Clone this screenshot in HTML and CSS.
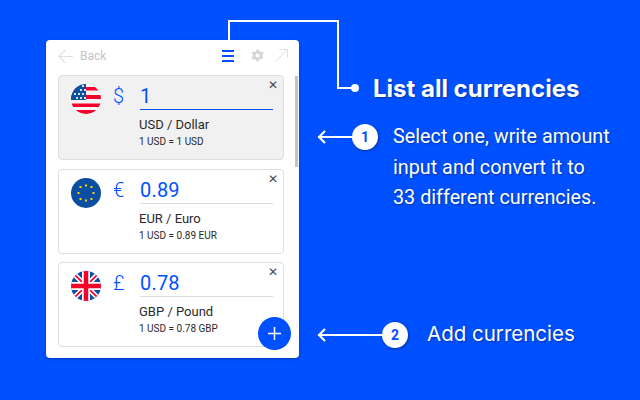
FILE: index.html
```html
<!DOCTYPE html>
<html lang="en">
<head>
<meta charset="utf-8">
<title>Currency converter</title>
<link rel="stylesheet" href="styles.css">
</head>
<body>
<main class="stage">
  <section class="panel">
    <header class="topbar">
      <svg class="back-arrow" width="15" height="15" viewBox="0 0 15 15"><path d="M7.5 .8 .9 7.5l6.6 6.7M.9 7.5h14" fill="none" stroke="#dcdcdc" stroke-width="1.1"/></svg>
      <span class="back-label">Back</span>
      <span class="topbar-space"></span>
      <svg class="menu-icon" width="12" height="12" viewBox="0 0 12 12"><path d="M0 0h12v2H0zM0 5h12v2H0zM0 10h12v2H0z" fill="#0050ff"/></svg>
      <svg class="gear-icon" width="13" height="13" viewBox="2 2 20 20"><path fill="#d6d6d6" fill-rule="evenodd" d="M19.4 13a7.500 7.500 0 0 0 0-2l2.200-1.700-2.100-3.600-2.600 1a7.600 7.600 0 0 0-1.800-1l-.4-2.700H9.700l-.4 2.700a7.600 7.600 0 0 0-1.800 1l-2.600-1-2.100 3.600L5 11a7.500 7.500 0 0 0 0 2l-2.200 1.700 2.100 3.600 2.600-1c.5.400 1.100.8 1.800 1l.4 2.700h4.200l.4-2.700c.7-.2 1.300-.6 1.800-1l2.600 1 2.100-3.600zM12 15a3 3 0 1 1 0-6 3 3 0 0 1 0 6z"/></svg>
      <svg class="expand-icon" width="13" height="13" viewBox="0 0 14 14"><path d="M.5 13.500 13.500.5M4.500.5h9v9" fill="none" stroke="#dedede" stroke-width="1"/></svg>
    </header>
    <div class="list">
      <article class="card card-active">
        <svg class="flag" width="30" height="30" viewBox="0 0 30 30">
          <defs><clipPath id="c1"><circle cx="15" cy="15" r="15"/></clipPath></defs>
          <g clip-path="url(#c1)">
            <rect width="30" height="30" fill="#f4f4f4"/>
            <path d="M0 3h30v3.500H0zM0 11h30v4H0zM0 19.500h30v3.500H0zM0 26h30v4H0z" fill="#f5002a"/>
            <path d="M0 0h15v16H0z" fill="#0b4ea2"/>
            <path d="M5 13h2v2H5zM9 13h2v2H9zM13 13h2v2h-2zM3 9h2v2H3zM7 9h2v2H7zM11 9h2v2h-2zM9 5h2v2H9zM13 5h2v2h-2zM11 1h2v2h-2z" fill="#fff" opacity=".85"/>
          </g>
        </svg>
        <span class="symbol">$</span>
        <div class="card-main">
          <div class="amount amount-active">1</div>
          <div class="name">USD / Dollar</div>
          <div class="rate">1 USD = 1 USD</div>
        </div>
        <span class="close">&#x2715;</span>
      </article>
      <article class="card">
        <svg class="flag" width="30" height="30" viewBox="0 0 30 30">
          <circle cx="15" cy="15" r="15" fill="#0b4ea2"/>
          <g fill="#ffd800">
            <rect x="14" y="6.500" width="2" height="2"/><rect x="19.500" y="8" width="2" height="2"/><rect x="21.500" y="14" width="2" height="2"/><rect x="19.500" y="20" width="2" height="2"/><rect x="14" y="21.500" width="2" height="2"/><rect x="8.500" y="20" width="2" height="2"/><rect x="6.500" y="14" width="2" height="2"/><rect x="8.500" y="8" width="2" height="2"/>
          </g>
        </svg>
        <span class="symbol">€</span>
        <div class="card-main">
          <div class="amount">0.89</div>
          <div class="name">EUR / Euro</div>
          <div class="rate">1 USD = 0.89 EUR</div>
        </div>
        <span class="close">&#x2715;</span>
      </article>
      <article class="card">
        <svg class="flag" width="30" height="30" viewBox="0 0 30 30">
          <defs><clipPath id="c3"><circle cx="15" cy="15" r="15"/></clipPath></defs>
          <g clip-path="url(#c3)">
            <rect width="30" height="30" fill="#0b4ea2"/>
            <path d="M0 0 30 30M30 0 0 30" stroke="#fff" stroke-width="5"/>
            <path d="M0 0 30 30M30 0 0 30" stroke="#f5002a" stroke-width="1.600"/>
            <path d="M15 0v30M0 15h30" stroke="#fff" stroke-width="8"/>
            <path d="M15 0v30M0 15h30" stroke="#f5002a" stroke-width="4.500"/>
          </g>
        </svg>
        <span class="symbol">£</span>
        <div class="card-main">
          <div class="amount">0.78</div>
          <div class="name">GBP / Pound</div>
          <div class="rate">1 USD = 0.78 GBP</div>
        </div>
        <span class="close">&#x2715;</span>
      </article>
    </div>
    <div class="scrollbar"></div>
    <div class="fab"><svg width="13" height="13" viewBox="0 0 13 13"><path d="M6.500 0v13M0 6.500h13" stroke="#fff" stroke-width="1.500"/></svg></div>
  </section>

  <svg class="connector" width="140" height="80" viewBox="0 0 140 80"><path d="M1 20V1h109v67h15" fill="none" stroke="#fff" stroke-width="2"/><circle cx="127" cy="68" r="4" fill="#fff"/></svg>

  <section class="notes">
    <h1 class="title">List all currencies</h1>
    <div class="note note-one">
      <div class="pointer pointer-short">
        <svg class="pointer-head" width="9" height="14" viewBox="0 0 9 14"><path d="M8 1 2 7l6 6" fill="none" stroke="#fff" stroke-width="2"/></svg>
        <span class="pointer-line"></span>
        <span class="badge">1</span>
      </div>
      <p class="note-text">Select one, write amount<br>input and convert it to<br>33 different currencies.</p>
    </div>
    <div class="note note-two">
      <div class="pointer pointer-long">
        <svg class="pointer-head" width="9" height="14" viewBox="0 0 9 14"><path d="M8 1 2 7l6 6" fill="none" stroke="#fff" stroke-width="2"/></svg>
        <span class="pointer-line"></span>
        <span class="badge">2</span>
      </div>
      <p class="add-text">Add currencies</p>
    </div>
  </section>
</main>
</body>
</html>
```

FILE: styles.css
```css
* { box-sizing: border-box; }
html, body { margin: 0; padding: 0; }
body { width: 640px; height: 400px; overflow: hidden; background: #0050ff; font-family: Roboto, sans-serif; }
.stage { position: relative; width: 640px; height: 400px; display: flex; padding: 40px 0 0 46px; }

.panel { position: relative; flex: none; width: 253px; height: 318px; background: #fff; border-radius: 4px; box-shadow: 0 1px 3px rgba(0,0,0,.3); padding: 0 15px 0 12px; }
.topbar { height: 35px; padding-bottom: 4px; display: flex; align-items: center; }
.back-arrow { flex: none; margin-top: 1px; }
.back-label { margin-left: 7px; font-size: 12px; color: #c4c4c4; }
.topbar-space { flex: 1; }
.menu-icon { flex: none; margin-right: 17px; }
.gear-icon { flex: none; margin-right: 11px; }
.expand-icon { flex: none; margin-right: -4px; }

.list { display: flex; flex-direction: column; gap: 8.500px; }
.card { position: relative; height: 85px; display: flex; align-items: flex-start; background: #fff; border: 1px solid #dedede; border-radius: 4px; padding: 8px 10px 0 12px; }
.card-active { background: #f1f1f1; }
.flag { flex: none; }
.symbol { flex: none; width: 27px; margin-left: 12px; font-size: 20px; font-weight: 300; line-height: 24px; color: #0050ff; }
.card-main { flex: 1; min-width: 0; }
.amount { height: 26px; border-bottom: 1px solid #dcdcdc; font-size: 20px; line-height: 24px; color: #0050ff; letter-spacing: .2px; }
.amount-active { border-bottom-color: #0050ff; }
.name { margin: 7px 0 0 -1px; font-size: 13px; line-height: 16px; color: #2a2a2a; }
.rate { margin: 3px 0 0 -1px; font-size: 10px; line-height: 12px; color: #2a2a2a; }
.close { position: absolute; top: 2px; right: 5px; font-family: "DejaVu Sans", sans-serif; font-size: 12px; line-height: 14px; color: #4a4a4a; }

.scrollbar { position: absolute; top: 36px; right: 1px; width: 3px; height: 91px; background: #c4c4c4; }
.fab { position: absolute; left: 212px; top: 277px; width: 33px; height: 33px; border-radius: 50%; background: #0050ff; display: flex; align-items: center; justify-content: center; }

.connector { position: absolute; left: 228px; top: 20px; }

.notes { flex: 1; position: relative; color: #fff; text-shadow: 1px 1px 2px rgba(0,0,0,.35); }
.title { margin: 34px 0 0 74px; font-family: Inter, sans-serif; font-size: 24px; line-height: 30px; font-weight: 700; }
.note { display: flex; }
.note-one { margin-top: 19px; margin-left: 18px; }
.note-two { margin-top: 106px; margin-left: 18px; }
.pointer { flex: none; display: flex; align-items: center; height: 26px; margin-top: 1px; }
.pointer-short { width: 61px; }
.pointer-long { width: 91px; }
.pointer-head { flex: none; margin-right: -8px; }
.pointer-line { flex: 1; height: 2px; background: #fff; }
.badge { flex: none; width: 26px; height: 26px; border-radius: 50%; background: #fff; color: #0050ff; font-size: 14px; font-weight: 700; line-height: 26px; text-align: center; text-shadow: none; box-shadow: 1px 1px 3px rgba(0,0,0,.35); }
.note-text { margin: -1px 0 1px 15px; font-size: 19.800px; line-height: 30.500px; font-weight: 400; white-space: nowrap; }
.add-text { margin: -2px 0 0 19px; font-family: Inter, sans-serif; font-size: 20.500px; line-height: 30px; }
```
